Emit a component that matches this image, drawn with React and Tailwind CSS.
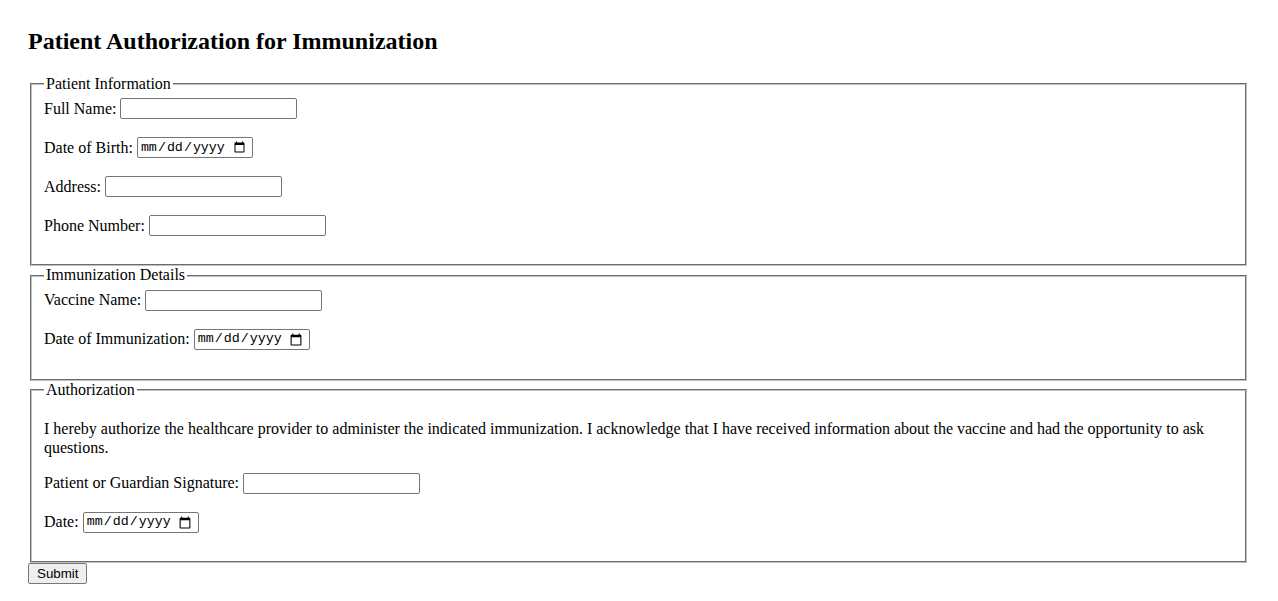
import React from 'react';

const textInput = "w-[177px] h-[21px] border border-[#767676] rounded-[2px] bg-white px-[2px] text-[13.33px] font-['Liberation_Sans',sans-serif]";
const dateInput = "w-[116px] h-[21px] border border-[#767676] rounded-[2px] bg-white pl-[2px] pr-[4px] text-[13.33px] font-['Liberation_Mono',monospace]";
const fieldsetCls = "mx-[2px] border-2 [border-style:groove] border-[#c0c0c0] px-3 pt-[5px]";

function Row({ label, type = 'text' }) {
  return (
    <div className="flex items-center h-[21px] mb-[18px]">
      <label>{label}</label>
      <span className="w-[4px]" />
      <input type={type} className={type === 'date' ? dateInput : textInput} />
    </div>
  );
}

export default function App() {
  return (
    <div className="bg-white text-black font-['Liberation_Serif',serif] text-[16px] leading-[18.4px] pl-[28px] pr-[29px] pt-[27px] min-h-[601px]">
      <h2 className="text-[24px] font-bold leading-[28px] mb-[20px]">Patient Authorization for Immunization</h2>
      <form onSubmit={(e) => e.preventDefault()}>
        <fieldset className={fieldsetCls + " pb-[10px]"}>
          <legend className="px-[2px]">Patient Information</legend>
          <Row label="Full Name:" />
          <Row label="Date of Birth:" type="date" />
          <Row label="Address:" />
          <Row label="Phone Number:" />
        </fieldset>
        <fieldset className={fieldsetCls + " pb-[11px]"}>
          <legend className="px-[2px]">Immunization Details</legend>
          <Row label="Vaccine Name:" />
          <Row label="Date of Immunization:" type="date" />
        </fieldset>
        <fieldset className={fieldsetCls + " pb-[10px]"}>
          <legend className="px-[2px]">Authorization</legend>
          <p className="my-4">
            I hereby authorize the healthcare provider to administer the indicated immunization. I acknowledge that I have received information about the vaccine and had the opportunity to ask questions.
          </p>
          <Row label="Patient or Guardian Signature:" />
          <Row label="Date:" type="date" />
        </fieldset>
        <button type="submit" className="block mt-0 border border-[#767676] rounded-[2px] bg-[#efefef] px-[8px] h-[21px] text-[13.33px] leading-[19px] font-['Liberation_Sans',sans-serif]">
          Submit
        </button>
      </form>
    </div>
  );
}
